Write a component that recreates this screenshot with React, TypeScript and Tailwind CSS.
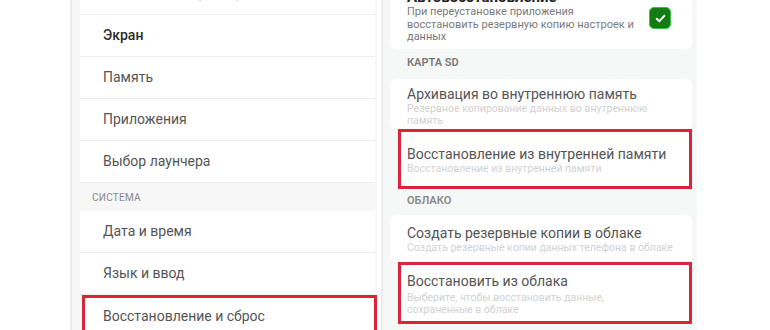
const font = { fontFamily: "Roboto, 'Noto Sans', sans-serif" };

function LeftRow({ label, strong, faint }: { label: string; strong?: boolean; faint?: boolean }) {
  return (
    <div className="shrink-0 h-[42px] flex items-center pl-[23px] bg-white border-b border-[#efefef]">
      <span
        className={
          strong
            ? "text-[14px] font-medium text-[#2b2b2b]"
            : faint
            ? "text-[13px] text-[#d0d0d0]"
            : "text-[14px] text-[#555]"
        }
      >
        {label}
      </span>
    </div>
  );
}

function SectionLabel({ text, className }: { text: string; className: string }) {
  return <div className={"shrink-0 " + className}>{text}</div>;
}

export default function App() {
  return (
    <div className="w-[770px] h-[330px] overflow-hidden bg-white flex" style={font}>
      {/* left phone screen */}
      <div className="shrink-0 ml-[70px] w-[307px] h-[330px] flex flex-col bg-[#f7f7f7] border-l-2 border-[#ececec] pl-[8px] pr-[2px]">
        <div className="shrink-0 -mt-[27px]">
          <LeftRow label="Технические параметры" faint />
        </div>
        <LeftRow label="Экран" strong />
        <LeftRow label="Память" />
        <LeftRow label="Приложения" />
        <LeftRow label="Выбор лаунчера" />
        <SectionLabel
          text="СИСТЕМА"
          className="h-[28px] flex items-center pl-[12px] text-[10px] tracking-wide text-[#8a8a8a]"
        />
        <LeftRow label="Дата и время" />
        <LeftRow label="Язык и ввод" />
        <div className="shrink-0 h-[42px] ml-[2px] -mr-[2px] border-[3px] border-[#dc2339] bg-white flex items-center pl-[18px]">
          <span className="text-[14px] text-[#555]">Восстановление и сброс</span>
        </div>
      </div>

      {/* right phone screen */}
      <div className="shrink-0 ml-[4px] w-[316px] h-[330px] flex flex-col bg-[#f6f7f7] border-l-2 border-[#ececec] pl-[7px] pr-[5px]">
        <div className="shrink-0 -mt-[20px] bg-white rounded-[6px] pt-[8px] pb-[5px] pl-[17px] pr-[21px] flex items-start justify-between">
          <div>
            <div className="text-[15px] leading-[18px] font-bold text-[#222]">Автовосстановление</div>
            <div className="text-[11px] leading-[12.5px] text-[#7a7a7a] w-[230px]">
              При переустановке приложения восстановить резервную копию настроек и данных
            </div>
          </div>
          <div className="mt-[19px] w-[22px] h-[22px] rounded-[5px] bg-[#127c12] border border-[#3fbf3f] flex items-center justify-center">
            <svg width="13" height="13" viewBox="0 0 12 12" fill="none">
              <path d="M2.5 6.2 L5 8.5 L9.5 3.5" stroke="white" strokeWidth="1.8" strokeLinecap="round" strokeLinejoin="round" />
            </svg>
          </div>
        </div>

        <SectionLabel
          text="КАРТА SD"
          className="h-[30px] flex items-center pl-[17px] text-[11px] font-semibold text-[#777]"
        />

        <div className="shrink-0 h-[50px] bg-white rounded-[6px] pt-[6px] pl-[17px]">
          <div className="text-[14px] leading-[18px] text-[#555]">Архивация во внутреннюю память</div>
          <div className="text-[10.5px] leading-[12px] text-[#d2d2d2] w-[245px]">
            Резервное копирование данных во внутреннюю память
          </div>
        </div>

        <div className="shrink-0 h-[60px] ml-[8px] border-[3px] border-[#dc2339] bg-white pt-[13px] pl-[6px]">
          <div className="text-[14px] leading-[18px] text-[#555]">Восстановление из внутренней памяти</div>
          <div className="text-[10.5px] leading-[12px] text-[#d2d2d2]">Восстановление из внутренней памяти</div>
        </div>

        <SectionLabel
          text="ОБЛАКО"
          className="h-[26px] flex items-center pl-[17px] text-[11px] font-semibold text-[#888]"
        />

        <div className="shrink-0 h-[47px] bg-white rounded-[6px] pt-[9px] pl-[17px]">
          <div className="text-[14px] leading-[18px] text-[#555]">Создать резервные копии в облаке</div>
          <div className="text-[10.5px] leading-[12px] text-[#d2d2d2]">
            Создать резервные копии данных телефона в облаке
          </div>
        </div>

        <div className="shrink-0 h-[62px] ml-[8px] border-[3px] border-[#dc2339] bg-white pt-[7px] pl-[6px]">
          <div className="text-[14px] leading-[18px] text-[#555]">Восстановить из облака</div>
          <div className="mt-[2px] text-[10.5px] leading-[12.5px] text-[#d2d2d2] w-[210px]">
            Выберите, чтобы восстановить данные, сохраненные в облаке
          </div>
        </div>
      </div>
    </div>
  );
}
